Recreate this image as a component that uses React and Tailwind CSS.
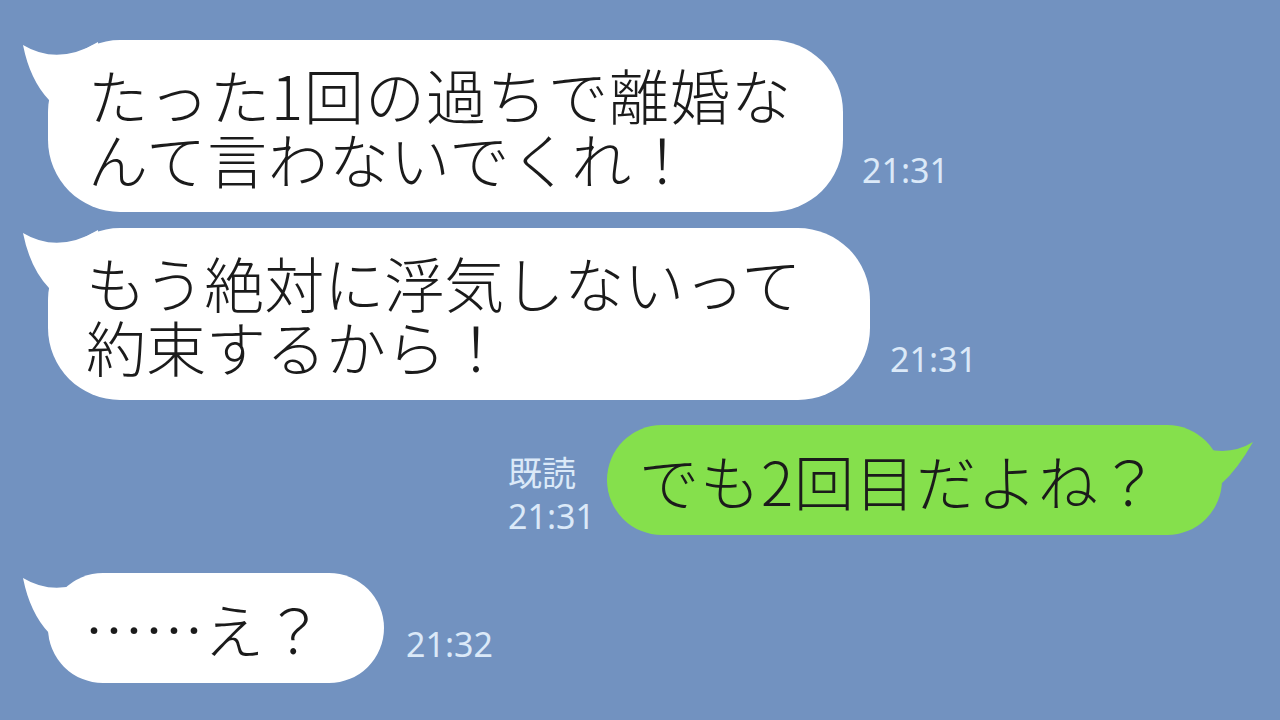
import React from 'react';

const jp = { fontFamily: '"Noto Sans CJK JP", "Noto Sans", sans-serif' };
const num = { fontFamily: '"Noto Sans", "Noto Sans CJK JP", sans-serif' };

function LeftTail({ color }) {
  return (
    <svg className="absolute left-[-30px] top-0" width="100" height="70" viewBox="0 0 100 70">
      <path d="M5 5 Q40 26 80 2 L80 60 L31 60 Q12 40 5 5 Z" fill={color} />
    </svg>
  );
}

function RightTail({ color }) {
  return (
    <svg className="absolute right-[-35px] top-0" width="100" height="70" viewBox="0 0 100 70">
      <path d="M96 17 Q75 30 50 24 L50 58 L65 58 Q80 45 96 17 Z" fill={color} />
    </svg>
  );
}

function Time({ children, className = '' }) {
  return (
    <div className={`text-[34px] leading-none text-[#dbe9f8] ${className}`} style={num}>
      {children}
    </div>
  );
}

export default function App() {
  return (
    <div className="w-full h-[720px] overflow-hidden bg-[#7292c0] pt-[40px]">
      {/* incoming 1 */}
      <div className="flex items-end ml-[48px]">
        <div className="relative w-[795px] h-[172px] rounded-[72px] bg-white flex items-center pl-[40px]">
          <LeftTail color="#ffffff" />
          <p className="relative text-[60px] font-light leading-[64px] tracking-[1px] text-[#1b1b1b] whitespace-nowrap" style={jp}>
            たった1回の過ちで離婚な<br />んて言わないでくれ！
          </p>
        </div>
        <Time className="ml-[19px] mb-[25px]">21:31</Time>
      </div>

      {/* incoming 2 */}
      <div className="flex items-end ml-[48px] mt-[16px]">
        <div className="relative w-[822px] h-[172px] rounded-[72px] bg-white flex items-center pl-[38px]">
          <LeftTail color="#ffffff" />
          <p className="relative text-[60px] font-light leading-[64px] text-[#1b1b1b] whitespace-nowrap" style={jp}>
            もう絶対に浮気しないって<br />約束するから！
          </p>
        </div>
        <Time className="ml-[20px] mb-[24px]">21:31</Time>
      </div>

      {/* outgoing */}
      <div className="flex items-end justify-end pr-[58px] mt-[25px]">
        <div className="flex flex-col items-start mr-[12px] mb-[2px]">
          <span className="text-[34px] leading-none mb-[10px] text-[#dbe9f8]" style={jp}>既読</span>
          <Time>21:31</Time>
        </div>
        <div className="relative w-[615px] h-[110px] rounded-full bg-[#85e04c] flex items-center pl-[32px]">
          <RightTail color="#85e04c" />
          <p className="relative text-[60px] font-light leading-[64px] tracking-[1px] text-[#1b1b1b] whitespace-nowrap" style={jp}>
            でも2回目だよね？
          </p>
        </div>
      </div>

      {/* incoming 3 */}
      <div className="flex items-end ml-[48px] mt-[38px]">
        <div className="relative w-[336px] h-[110px] rounded-full bg-white flex items-center pl-[36px]">
          <LeftTail color="#ffffff" />
          <p className="relative text-[60px] font-light leading-[64px] text-[#1b1b1b] whitespace-nowrap" style={jp}>
            ……え？
          </p>
        </div>
        <Time className="ml-[22px] mb-[22px]">21:32</Time>
      </div>
    </div>
  );
}
